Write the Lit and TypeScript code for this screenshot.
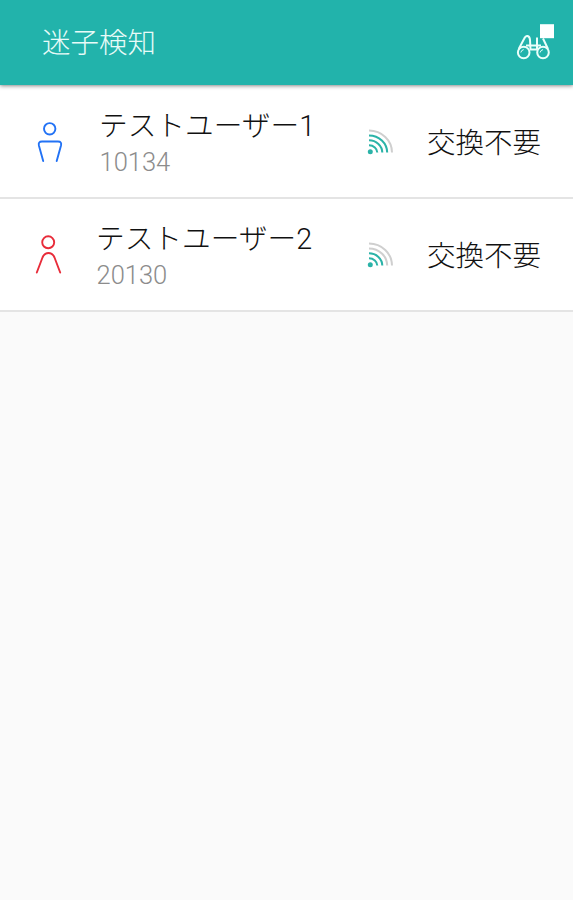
import { LitElement, html, svg, css } from "lit";
import { customElement, property } from "lit/decorators.js";
import { classMap } from "lit/directives/class-map.js";

interface User {
  name: string;
  code: string;
  gender: "male" | "female";
  signal: number;
  battery: string;
}

const users: User[] = [
  { name: "テストユーザー1", code: "10134", gender: "male", signal: 3, battery: "交換不要" },
  { name: "テストユーザー2", code: "20130", gender: "female", signal: 2, battery: "交換不要" },
];

@customElement("signal-icon")
class SignalIcon extends LitElement {
  @property({ type: Number }) level = 0;

  static styles = css`
    :host { display: block; width: 28px; height: 28px; }
    svg { display: block; }
    .arc { fill: none; stroke: #cfcfcf; stroke-width: 2; }
    .arc.on { stroke: #2bb3a8; }
    .dot { fill: #2bb3a8; }
  `;

  render() {
    return html`<svg width="28" height="28" viewBox="0 0 28 28">
      <circle class="dot" cx="4.3" cy="24.8" r="2.5"></circle>
      ${[7.3, 12.3, 17.2, 22].map(
        (r, i) => svg`<path class=${classMap({ arc: true, on: i < this.level })}
          d="M3 ${25.6 - r}A${r + 1} ${r} 0 0 1 ${4 + r} 25.6"></path>`
      )}
    </svg>`;
  }
}

@customElement("user-row")
class UserRow extends LitElement {
  @property({ attribute: false }) user!: User;

  static styles = css`
    :host { display: block; }
    .row {
      box-sizing: border-box;
      height: 113px;
      display: flex;
      align-items: center;
      background: #fff;
      border-bottom: 2px solid #e4e4e4;
      padding: 0 0 2px 32px;
    }
    .person { flex: none; width: 36px; height: 46px; fill: none; stroke-width: 1.9; stroke-linecap: round; }
    .male { stroke: #2272f5; }
    .female { stroke: #e82c3a; margin-left: -1px; margin-right: 1px; }
    .info { width: 266px; padding: 6px 0 0 31px; box-sizing: border-box; }
    .info.shift { padding-left: 28px; }
    .name {
      font-family: Roboto, "Noto Sans CJK JP", sans-serif;
      font-size: 28.7px;
      line-height: 37px;
      color: #111;
      white-space: nowrap;
    }
    .code {
      font: 300 25.5px/35px Roboto, sans-serif;
      color: #8c8c8c;
      padding-left: 0.5px;
    }
    signal-icon { margin-left: 32px; }
    .battery { margin-left: 33px; font-size: 28.5px; line-height: 38px; color: #111; white-space: nowrap; }
  `;

  render() {
    const u = this.user;
    const male = u.gender === "male";
    return html`<div class="row">
      ${male
        ? html`<svg class="person male" viewBox="0 0 36 46">
            <circle cx="17.7" cy="10.8" r="5.7"></circle>
            <path d="M11.2 43L6.9 27.5Q6 23.5 10 23.5H26Q30 23.5 29 27.5L24.7 43"></path>
          </svg>`
        : html`<svg class="person female" viewBox="0 0 36 46">
            <circle cx="17.2" cy="11.3" r="6"></circle>
            <path d="M5.8 41.5L11.5 26.5Q13.5 22 17.5 22Q21.5 22 23.5 26.5L29.2 41.5"></path>
          </svg>`}
      <div class=${classMap({ info: true, shift: !male })}>
        <div class="name">${u.name}</div>
        <div class="code">${u.code}</div>
      </div>
      <signal-icon .level=${u.signal}></signal-icon>
      <div class="battery">${u.battery}</div>
    </div>`;
  }
}

@customElement("app-root")
class AppRoot extends LitElement {
  static styles = css`
    :host {
      display: block;
      min-height: 100vh;
      background: #fafafa;
      font-family: "Noto Sans CJK JP", sans-serif;
      font-weight: 300;
    }
    .bar {
      position: relative;
      box-sizing: border-box;
      height: 85px;
      display: flex;
      align-items: center;
      justify-content: space-between;
      padding: 0 18px 0 42px;
      background: #22b3ab;
      box-shadow: 0 1px 4px rgba(0, 0, 0, 0.45);
    }
    .title { font-size: 28.5px; line-height: 40px; padding-bottom: 4px; color: #e8fbf8; }
    .binoculars { width: 40px; height: 40px; fill: none; stroke: #eafffa; stroke-width: 2; stroke-linejoin: round; }
    .badge { fill: #fff; stroke: none; }
    .list { padding-top: 1px; }
  `;

  render() {
    return html`
      <header class="bar">
        <div class="title">迷子検知</div>
        <svg class="binoculars" viewBox="515 22.5 40 40">
          <circle cx="523.7" cy="52" r="5.8"></circle>
          <circle cx="543" cy="52" r="5.8"></circle>
          <path d="M518.7 48.5L524 38.5Q525.5 35.2 527.5 35.5Q529.8 36 530 39.5L530.5 49M548 48.5L543 38M537 37V49M526 45H541M530 49H537"></path>
          <path d="M520.8 52Q521.3 49.6 523.7 49.1M540.1 52Q540.6 49.6 543 49.1" stroke-width="1"></path>
          <path class="badge" d="M540 23.7H554V37.7H540Z"></path>
        </svg>
      </header>
      <main class="list">${users.map((u) => html`<user-row .user=${u}></user-row>`)}</main>
    `;
  }
}
